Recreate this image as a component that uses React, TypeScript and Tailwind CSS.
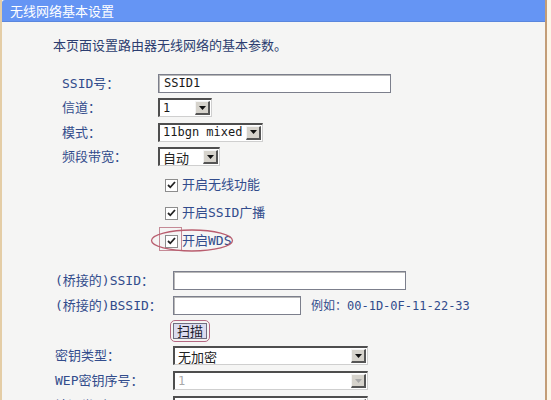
import React from "react";

const MONO = { fontFamily: '"DejaVu Sans Mono","Noto Sans CJK SC",monospace' };
const CJK = { fontFamily: '"Noto Sans CJK SC","DejaVu Sans",sans-serif' };

function Arrow({ disabled }: { disabled?: boolean }) {
  return (
    <div className="w-[15px] h-[14px] mr-[1px] flex items-center justify-center bg-[#d6d3cc] border-t border-l border-t-[#f4f4f4] border-l-[#f4f4f4] border-r-2 border-b-2 border-r-[#555] border-b-[#555]">
      <svg width="7" height="4" viewBox="0 0 7 4">
        <path d="M0 0h7L3.5 4z" fill={disabled ? "#a8a8a8" : "#111"} />
      </svg>
    </div>
  );
}

function Select({
  w,
  value,
  disabled,
  cjk,
}: {
  w: string;
  value: string;
  disabled?: boolean;
  cjk?: boolean;
}) {
  return (
    <div
      className={`${w} h-[19px] flex items-center bg-white border-t-2 border-l-2 border-t-[#4e4e4e] border-l-[#4e4e4e] border-r border-b border-r-[#cfcfcf] border-b-[#cfcfcf]`}
    >
      <span
        className={`flex-1 pl-[3px] leading-[15px] whitespace-nowrap ${
          disabled ? "text-[#a9a9a9] text-[12px]" : cjk ? "text-[#222] text-[13px]" : "text-[#1a1a1a] text-[12px]"
        }`}
        style={cjk ? CJK : MONO}
      >
        {value}
      </span>
      <Arrow disabled={disabled} />
    </div>
  );
}

function TextInput({ w, value }: { w: string; value?: string }) {
  return (
    <div
      className={`${w} h-[19px] flex items-center bg-white border border-[#7c7f8c] shadow-[inset_1px_1px_0_#b8b8b8]`}
    >
      <span className="pl-[5px] text-[12px] text-[#1a1a1a] leading-[15px]" style={MONO}>
        {value}
      </span>
    </div>
  );
}

function Label({ children, w }: { children: React.ReactNode; w: string }) {
  return (
    <div className={`${w} shrink-0 text-[13px] text-[#324c8c] whitespace-nowrap`} style={MONO}>
      {children}
    </div>
  );
}

function Check({ label }: { label: string }) {
  return (
    <div className="h-[28px] flex items-center pl-[163px]">
      <div className="w-[13px] h-[13px] bg-white border border-[#8d8d8d] flex items-center justify-center">
        <svg width="9" height="8" viewBox="0 0 9 8">
          <path d="M1 4l2.3 2.3L8 1" stroke="#222" strokeWidth="1.8" fill="none" />
        </svg>
      </div>
      <span className="ml-[4px] text-[13px] text-[#324c8c]" style={MONO}>
        {label}
      </span>
    </div>
  );
}

export default function App() {
  return (
    <div className="w-[551px] h-[400px] overflow-hidden flex bg-[#fdf6e8]">
      <div className="w-[2px] shrink-0 bg-[#e4cda6]" />
      <div className="w-[543px] shrink-0 flex flex-col bg-[#f5f5f4]">
        <div className="h-[22px] shrink-0 bg-[#6595f4] rounded-tl-[3px] flex items-center pl-[8px] border-b border-b-[#5a86dd]">
          <span className="text-white text-[13px] leading-none" style={CJK}>
            无线网络基本设置
          </span>
        </div>
        <div className="pt-[12px] pl-[51px]">
          <div className="h-[22px] flex items-center text-[13px] text-[#2c3d70]" style={CJK}>
            本页面设置路由器无线网络的基本参数。
          </div>
        </div>
        <div className="mt-[15px] flex flex-col">
          <div className="h-[24.5px] flex items-center pl-[60px]">
            <Label w="w-[96px]">SSID号：</Label>
            <TextInput w="w-[233px]" value="SSID1" />
          </div>
          <div className="h-[24.5px] flex items-center pl-[60px]">
            <Label w="w-[96px]">信道：</Label>
            <Select w="w-[54px]" value="1" />
          </div>
          <div className="h-[24.5px] flex items-center pl-[60px]">
            <Label w="w-[96px]">模式：</Label>
            <Select w="w-[105px]" value="11bgn mixed" />
          </div>
          <div className="h-[24.5px] flex items-center pl-[60px]">
            <Label w="w-[96px]">频段带宽：</Label>
            <Select w="w-[62px]" value="自动" cjk />
          </div>
        </div>
        <div className="mt-[2px] flex flex-col">
          <Check label="开启无线功能" />
          <Check label="开启SSID广播" />
          <div className="relative">
            <Check label="开启WDS" />
            <div className="absolute left-[157px] top-[0px] w-[23px] h-[24px] border border-[#c58a96]" />
            <svg className="absolute left-[148px] top-[1px]" width="84" height="25" viewBox="0 0 84 25">
              <ellipse cx="42" cy="12.5" rx="40.5" ry="10.5" fill="none" stroke="#b95d6e" strokeWidth="1.3" />
            </svg>
          </div>
        </div>
        <div className="mt-[13px] flex flex-col">
          <div className="h-[25px] flex items-center pl-[53px]">
            <Label w="w-[118px]">(桥接的)SSID：</Label>
            <TextInput w="w-[233px]" />
          </div>
          <div className="h-[25px] flex items-center pl-[53px]">
            <Label w="w-[118px]">(桥接的)BSSID：</Label>
            <TextInput w="w-[128px]" />
            <span className="ml-[10px] text-[12px] text-[#324c8c] whitespace-nowrap" style={MONO}>
              例如：00-1D-0F-11-22-33
            </span>
          </div>
          <div className="h-[25px] flex items-center pl-[168px]">
            <div className="px-[2px] py-[2px] rounded-[5px] border-[1.5px] border-[#b46882]">
              <div
                className="h-[16px] px-[3px] flex items-center bg-[#dcdcef] border border-[#6f6f80] text-[13px] text-[#1c1c2c]"
                style={CJK}
              >
                扫描
              </div>
            </div>
          </div>
          <div className="h-[25px] flex items-center pl-[53px]">
            <Label w="w-[118px]">密钥类型：</Label>
            <Select w="w-[195px]" value="无加密" cjk />
          </div>
          <div className="h-[25px] flex items-center pl-[53px]">
            <Label w="w-[118px]">WEP密钥序号：</Label>
            <Select w="w-[195px]" value="1" disabled />
          </div>
          <div className="h-[25px] flex items-center pl-[53px]">
            <Label w="w-[118px]">认证类型：</Label>
            <Select w="w-[195px]" value="开放系统" cjk disabled />
          </div>
        </div>
      </div>
      <div className="w-[2px] shrink-0 bg-[#c39d77]" />
      <div className="flex-1 bg-[#fdf6e8]" />
    </div>
  );
}
